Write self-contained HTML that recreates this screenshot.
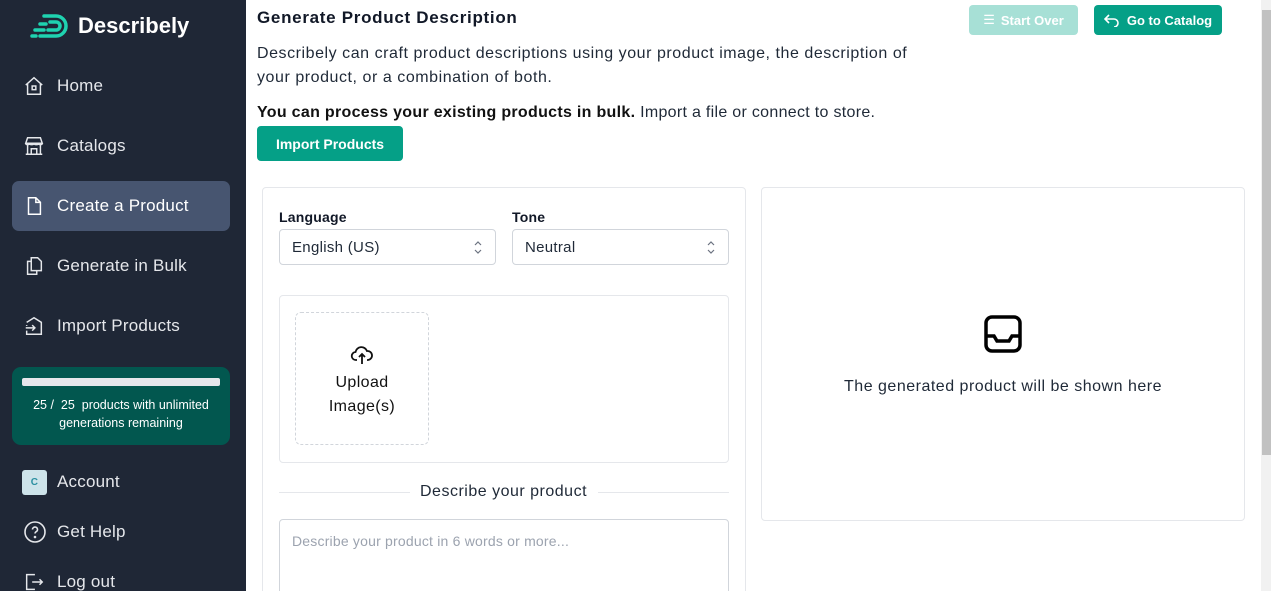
<!DOCTYPE html>
<html style="overflow:hidden;height:591px"><head><meta charset="utf-8"><style>
*{box-sizing:border-box;margin:0;padding:0}
body{width:1271px;height:591px;overflow:hidden;font-family:"Liberation Sans",sans-serif;background:#fff;position:relative;color:#111827}
.sb{position:absolute;left:0;top:0;width:246px;height:591px;background:#1f2736}
.logo{position:absolute;left:30px;top:12px;display:flex;align-items:center;color:#fff;font-weight:bold;font-size:21px}
.nav{position:absolute;left:12px;width:218px;height:50px;display:flex;align-items:center;color:#e5e7eb;font-size:17px;border-radius:7px;letter-spacing:.2px}
.nav svg{position:absolute;left:11px}
.nav span{position:absolute;left:45px}
.act{background:#475570}
.card{position:absolute;left:12px;top:367px;width:218px;height:78px;background:#02574f;border-radius:9px;color:#fff;font-size:12.5px;text-align:center;line-height:18px}
.bar{position:absolute;left:10px;top:11px;width:198px;height:8px;background:#e5e7eb;border-radius:2px}
.main{position:absolute;left:257px}
.btn{position:absolute;border-radius:4px;color:#fff;font-weight:bold;font-size:13px;display:flex;align-items:center;justify-content:center}
.panel{position:absolute;border:1px solid #e5e7eb;border-radius:4px}
.sel{position:absolute;height:36px;border:1px solid #d1d5db;border-radius:4px;font-size:15px;display:flex;align-items:center;padding-left:12px;color:#1f2937;letter-spacing:.3px}
.sel svg{position:absolute;right:13px;top:11px}
.lbl{position:absolute;font-weight:bold;font-size:14px;letter-spacing:.2px}
</style></head><body>
<div class="sb">
 <div class="logo"><svg width="42" height="28" viewBox="0 0 42 28"><g fill="none" stroke="#1fd3b0" stroke-width="3.5" stroke-linecap="round"><path d="M14 4h12a10 10 0 0 1 0 20H10"/><path d="M20 10h6a4 4 0 0 1 0 8h-8"/><path d="M2 24h4M5 18h9M10 12h6"/></g></svg><span style="margin-left:6px;font-size:22px">Describely</span></div>
 <div class="nav" style="top:61px"><svg width="22" height="22" viewBox="0 0 24 24" fill="none" stroke="#e5e7eb" stroke-width="1.6"><path d="M3 11l9-8 9 8M5 9v12h14V9"/><rect x="10" y="12" width="4" height="4"/></svg><span>Home</span></div>
 <div class="nav" style="top:121px"><svg width="22" height="22" viewBox="0 0 24 24" fill="none" stroke="#e5e7eb" stroke-width="1.6"><path d="M3 9l2-6h14l2 6H3zM3 9c0 2 4 2 4 0 0 2 5 2 5 0 0 2 5 2 5 0 0 2 4 2 4 0M5 11v10h14V11M9 21v-6h6v6M3 21h18"/></svg><span>Catalogs</span></div>
 <div class="nav act" style="top:181px"><svg width="22" height="22" viewBox="0 0 24 24" fill="none" stroke="#fff" stroke-width="1.6"><path d="M6 3h8l5 5v13H6zM14 3v5h5"/></svg><span style="color:#fff">Create a Product</span></div>
 <div class="nav" style="top:241px"><svg width="22" height="22" viewBox="0 0 24 24" fill="none" stroke="#e5e7eb" stroke-width="1.6"><path d="M9 3h7l4 4v10H9zM9 7H5v14h10v-4"/></svg><span>Generate in Bulk</span></div>
 <div class="nav" style="top:301px"><svg width="22" height="22" viewBox="0 0 24 24" fill="none" stroke="#e5e7eb" stroke-width="1.6"><path d="M4 8l8-5 8 5v13H4v-4M4 12v-1M3 14h10M10 11l3 3-3 3"/></svg><span>Import Products</span></div>
 <div class="card"><div class="bar"></div><div style="position:absolute;top:29px;left:0;right:0">25 /&nbsp; 25&nbsp; products with unlimited<br>generations remaining</div></div>
 <div class="nav" style="top:457px"><div style="position:absolute;left:10px;width:25px;height:25px;background:#cde3ea;border-radius:3px;color:#2a8fa0;font-size:10px;font-weight:bold;display:flex;align-items:center;justify-content:center">C</div><span>Account</span></div>
 <div class="nav" style="top:507px"><svg width="24" height="24" viewBox="0 0 24 24" fill="none" stroke="#e5e7eb" stroke-width="1.6"><circle cx="12" cy="12" r="10"/><path d="M9.5 9.5a2.5 2.5 0 1 1 3.5 2.3c-.7.4-1 1-1 1.7"/><circle cx="12" cy="17" r=".5" fill="#e5e7eb"/></svg><span>Get Help</span></div>
 <div class="nav" style="top:557px"><svg width="22" height="22" viewBox="0 0 24 24" fill="none" stroke="#e5e7eb" stroke-width="1.6"><path d="M13 4H4v16h9M10 12h11M18 9l3 3-3 3"/></svg><span>Log out</span></div>
</div>
<div class="main" style="top:8px;font-size:17px;font-weight:bold;letter-spacing:.7px">Generate Product Description</div>
<div class="main" style="top:42px;font-size:16px;line-height:24px;color:#1f2937;letter-spacing:.55px">Describely can craft product descriptions using your product image, the description of<br>your product, or a combination of both.</div>
<div class="main" style="top:104px;font-size:16px;color:#1f2937;letter-spacing:.3px"><b style="color:#111">You can process your existing products in bulk.</b> Import a file or connect to store.</div>
<div class="btn" style="left:257px;top:126px;width:146px;height:35px;background:#05a087;font-size:14px">Import Products</div>
<div class="btn" style="left:969px;top:5px;width:109px;height:30px;background:#a7e0d6"><span style="font-weight:normal;margin-right:6px">☰</span>Start Over</div>
<div class="btn" style="left:1094px;top:5px;width:128px;height:30px;background:#05a087"><svg width="16" height="14" viewBox="0 0 16 14" fill="none" stroke="#fff" stroke-width="1.6" style="margin-right:7px"><path d="M5 2L1 6l4 4M1 6h9a4 4 0 0 1 0 8"/></svg>Go to Catalog</div>
<div class="panel" style="left:262px;top:187px;width:484px;height:420px"></div>
<div class="lbl" style="left:279px;top:209px">Language</div>
<div class="lbl" style="left:512px;top:209px">Tone</div>
<div class="sel" style="left:279px;top:229px;width:217px">English (US)<svg width="8" height="13" viewBox="0 0 8 13" fill="none" stroke="#6b7280" stroke-width="1.2"><path d="M1 4l3-3 3 3M1 9l3 3 3-3"/></svg></div>
<div class="sel" style="left:512px;top:229px;width:217px">Neutral<svg width="8" height="13" viewBox="0 0 8 13" fill="none" stroke="#6b7280" stroke-width="1.2"><path d="M1 4l3-3 3 3M1 9l3 3 3-3"/></svg></div>
<div class="panel" style="left:279px;top:295px;width:450px;height:168px"></div>
<div style="position:absolute;left:295px;top:312px;width:134px;height:133px;border:1px dashed #d1d5db;border-radius:6px;text-align:center;font-size:16px;line-height:24px;color:#111;letter-spacing:.4px">
 <svg width="28" height="24" viewBox="0 0 24 24" fill="none" stroke="#111" stroke-width="1.8" style="margin-top:30px"><path d="M7 17H6a4 4 0 0 1-.5-8A6 6 0 0 1 17 8a4 4 0 0 1 1 9h-1M12 21v-9M9 14l3-3 3 3"/></svg><div style="margin-top:-4px">Upload<br>Image(s)</div></div>
<div style="position:absolute;left:279px;top:492px;width:131px;height:1px;background:#e5e7eb"></div>
<div style="position:absolute;left:598px;top:492px;width:131px;height:1px;background:#e5e7eb"></div>
<div style="position:absolute;left:420px;top:483px;font-size:16px;color:#1f2937;letter-spacing:.5px">Describe your product</div>
<div class="panel" style="left:279px;top:519px;width:450px;height:90px;border-color:#d1d5db"></div>
<div style="position:absolute;left:292px;top:533px;font-size:14px;color:#9ca3af;letter-spacing:.2px">Describe your product in 6 words or more...</div>
<div class="panel" style="left:761px;top:187px;width:484px;height:334px"></div>
<svg style="position:absolute;left:983px;top:314px" width="40" height="40" viewBox="0 0 40 40" fill="none" stroke="#000" stroke-width="3.5"><rect x="3" y="3" width="34" height="34" rx="6"/><path d="M3 22h8l3 5h12l3-5h8"/></svg>
<div style="position:absolute;left:761px;width:484px;top:378px;text-align:center;font-size:16px;color:#1f2937;letter-spacing:.5px">The generated product will be shown here</div>
<div style="position:absolute;left:1261px;top:0;width:10px;height:591px;background:#f1f1f1"></div>
<div style="position:absolute;left:1262px;top:10px;width:9px;height:445px;background:#c1c1c1"></div>
</body></html>
